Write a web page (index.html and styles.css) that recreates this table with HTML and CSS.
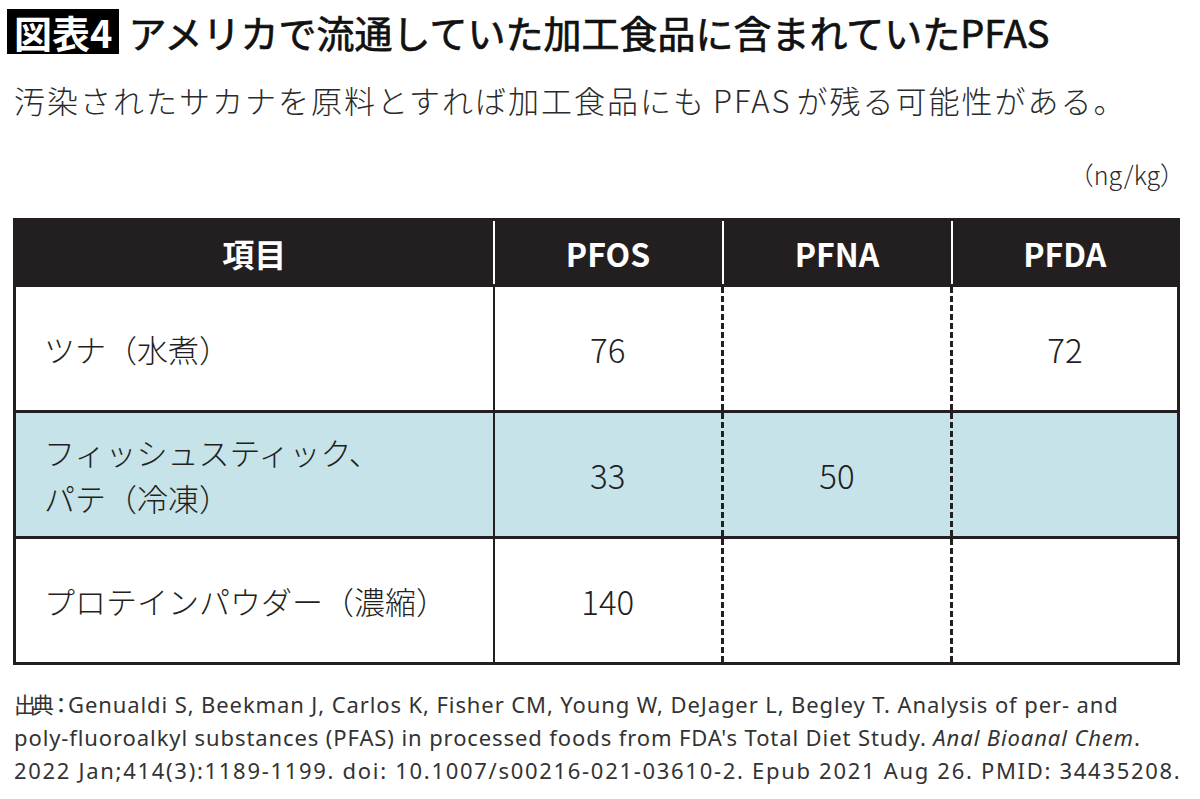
FILE: index.html
```html
<!DOCTYPE html>
<html lang="ja">
<head>
<meta charset="utf-8">
<title>図表4</title>
<link rel="stylesheet" href="styles.css">
</head>
<body>
<div class="page">
  <h1 class="title"><span class="tag">図表4</span><span class="title-text">アメリカで流通していた加工食品に含まれていたPFAS</span></h1>
  <p class="subtitle">汚染されたサカナを原料とすれば加工食品にも<span class="latin">PFAS</span>が残る可能性がある。</p>
  <div class="unit">（ng/kg）</div>
  <table class="data">
    <colgroup>
      <col class="c-item">
      <col class="c-val">
      <col class="c-val">
      <col>
    </colgroup>
    <thead>
      <tr>
        <th>項目</th>
        <th>PFOS</th>
        <th>PFNA</th>
        <th>PFDA</th>
      </tr>
    </thead>
    <tbody>
      <tr>
        <td class="item">ツナ（水煮）</td>
        <td class="num">76</td>
        <td class="num"></td>
        <td class="num">72</td>
      </tr>
      <tr class="hl">
        <td class="item">フィッシュスティック、<br>パテ（冷凍）</td>
        <td class="num">33</td>
        <td class="num">50</td>
        <td class="num"></td>
      </tr>
      <tr>
        <td class="item">プロテインパウダー（濃縮）</td>
        <td class="num">140</td>
        <td class="num"></td>
        <td class="num"></td>
      </tr>
    </tbody>
  </table>
  <p class="source"><span class="cjk">出典：</span>Genualdi S, Beekman J, Carlos K, Fisher CM, Young W, DeJager L, Begley T. Analysis of per- and<br>poly-fluoroalkyl substances (PFAS) in processed foods from FDA's Total Diet Study. <i>Anal Bioanal Chem</i>.<br><span class="tail">2022 Jan;414(3):1189-1199. doi: 10.1007/s00216-021-03610-2. Epub 2021 Aug 26. PMID: 34435208.</span></p>
</div>
</body>
</html>
```

FILE: styles.css
```css
html, body {
  margin: 0;
  padding: 0;
  background: #ffffff;
}

body {
  font-family: "Noto Sans CJK JP", "Noto Sans", sans-serif;
  color: #231f20;
}

.page {
  padding: 9px 20px 0 7px;
}

.title {
  display: flex;
  align-items: center;
  gap: 9px;
  margin: 0;
  height: 45px;
  font-size: 38px;
  font-weight: 400;
  line-height: 45px;
  color: #111;
}

.title-text {
  -webkit-text-stroke: 0.7px #111;
}

.tag {
  display: block;
  background: #000;
  color: #fff;
  font-weight: 700;
  padding: 0 7px;
  height: 45px;
  line-height: 45px;
}

.subtitle {
  margin: 26px 0 0 7px;
  font-size: 31px;
  line-height: 40px;
  letter-spacing: 2px;
  font-weight: 300;
  color: #2a2a2a;
}

.subtitle .latin {
  margin: 0 5px 0 7px;
}

.unit {
  margin-top: 38px;
  text-align: right;
  font-size: 25px;
  line-height: 32px;
  font-weight: 300;
  color: #2a2a2a;
  margin-right: -5px;
}

.data {
  margin: 28px 0 0 6px;
  width: 1167px;
  border-collapse: collapse;
  table-layout: fixed;
  border: 3px solid #231f20;
}

.c-item { width: 479px; }
.c-val { width: 229px; }

.data th {
  background: #231f20;
  color: #fff;
  height: 63px;
  font-size: 32px;
  font-weight: 700;
  text-align: center;
  padding: 0;
  border-left: 2px solid #fff;
}

.data th:first-child {
  border-left: none;
}

.data td {
  height: 123px;
  padding: 0;
  border-top: 3px solid #231f20;
  font-size: 31px;
  font-weight: 300;
  line-height: 46px;
}

.data td.item {
  padding-left: 28px;
  text-align: left;
}

.data td.num {
  text-align: center;
  font-size: 33px;
  border-left: 3px dashed #231f20;
}

.data td.item + td.num {
  border-left: 2px solid #231f20;
}

.data tr.hl td {
  background: #c5e3e9;
}

.source {
  margin: 22px 0 0 7px;
  font-family: "Noto Sans", "Noto Sans CJK JP", sans-serif;
  font-size: 22px;
  line-height: 33px;
  letter-spacing: 0.9px;
  color: #333;
  white-space: nowrap;
}

.source .cjk {
  font-family: "Noto Sans CJK JP", sans-serif;
  letter-spacing: -4px;
}

.source .tail {
  letter-spacing: 1.7px;
}
```
